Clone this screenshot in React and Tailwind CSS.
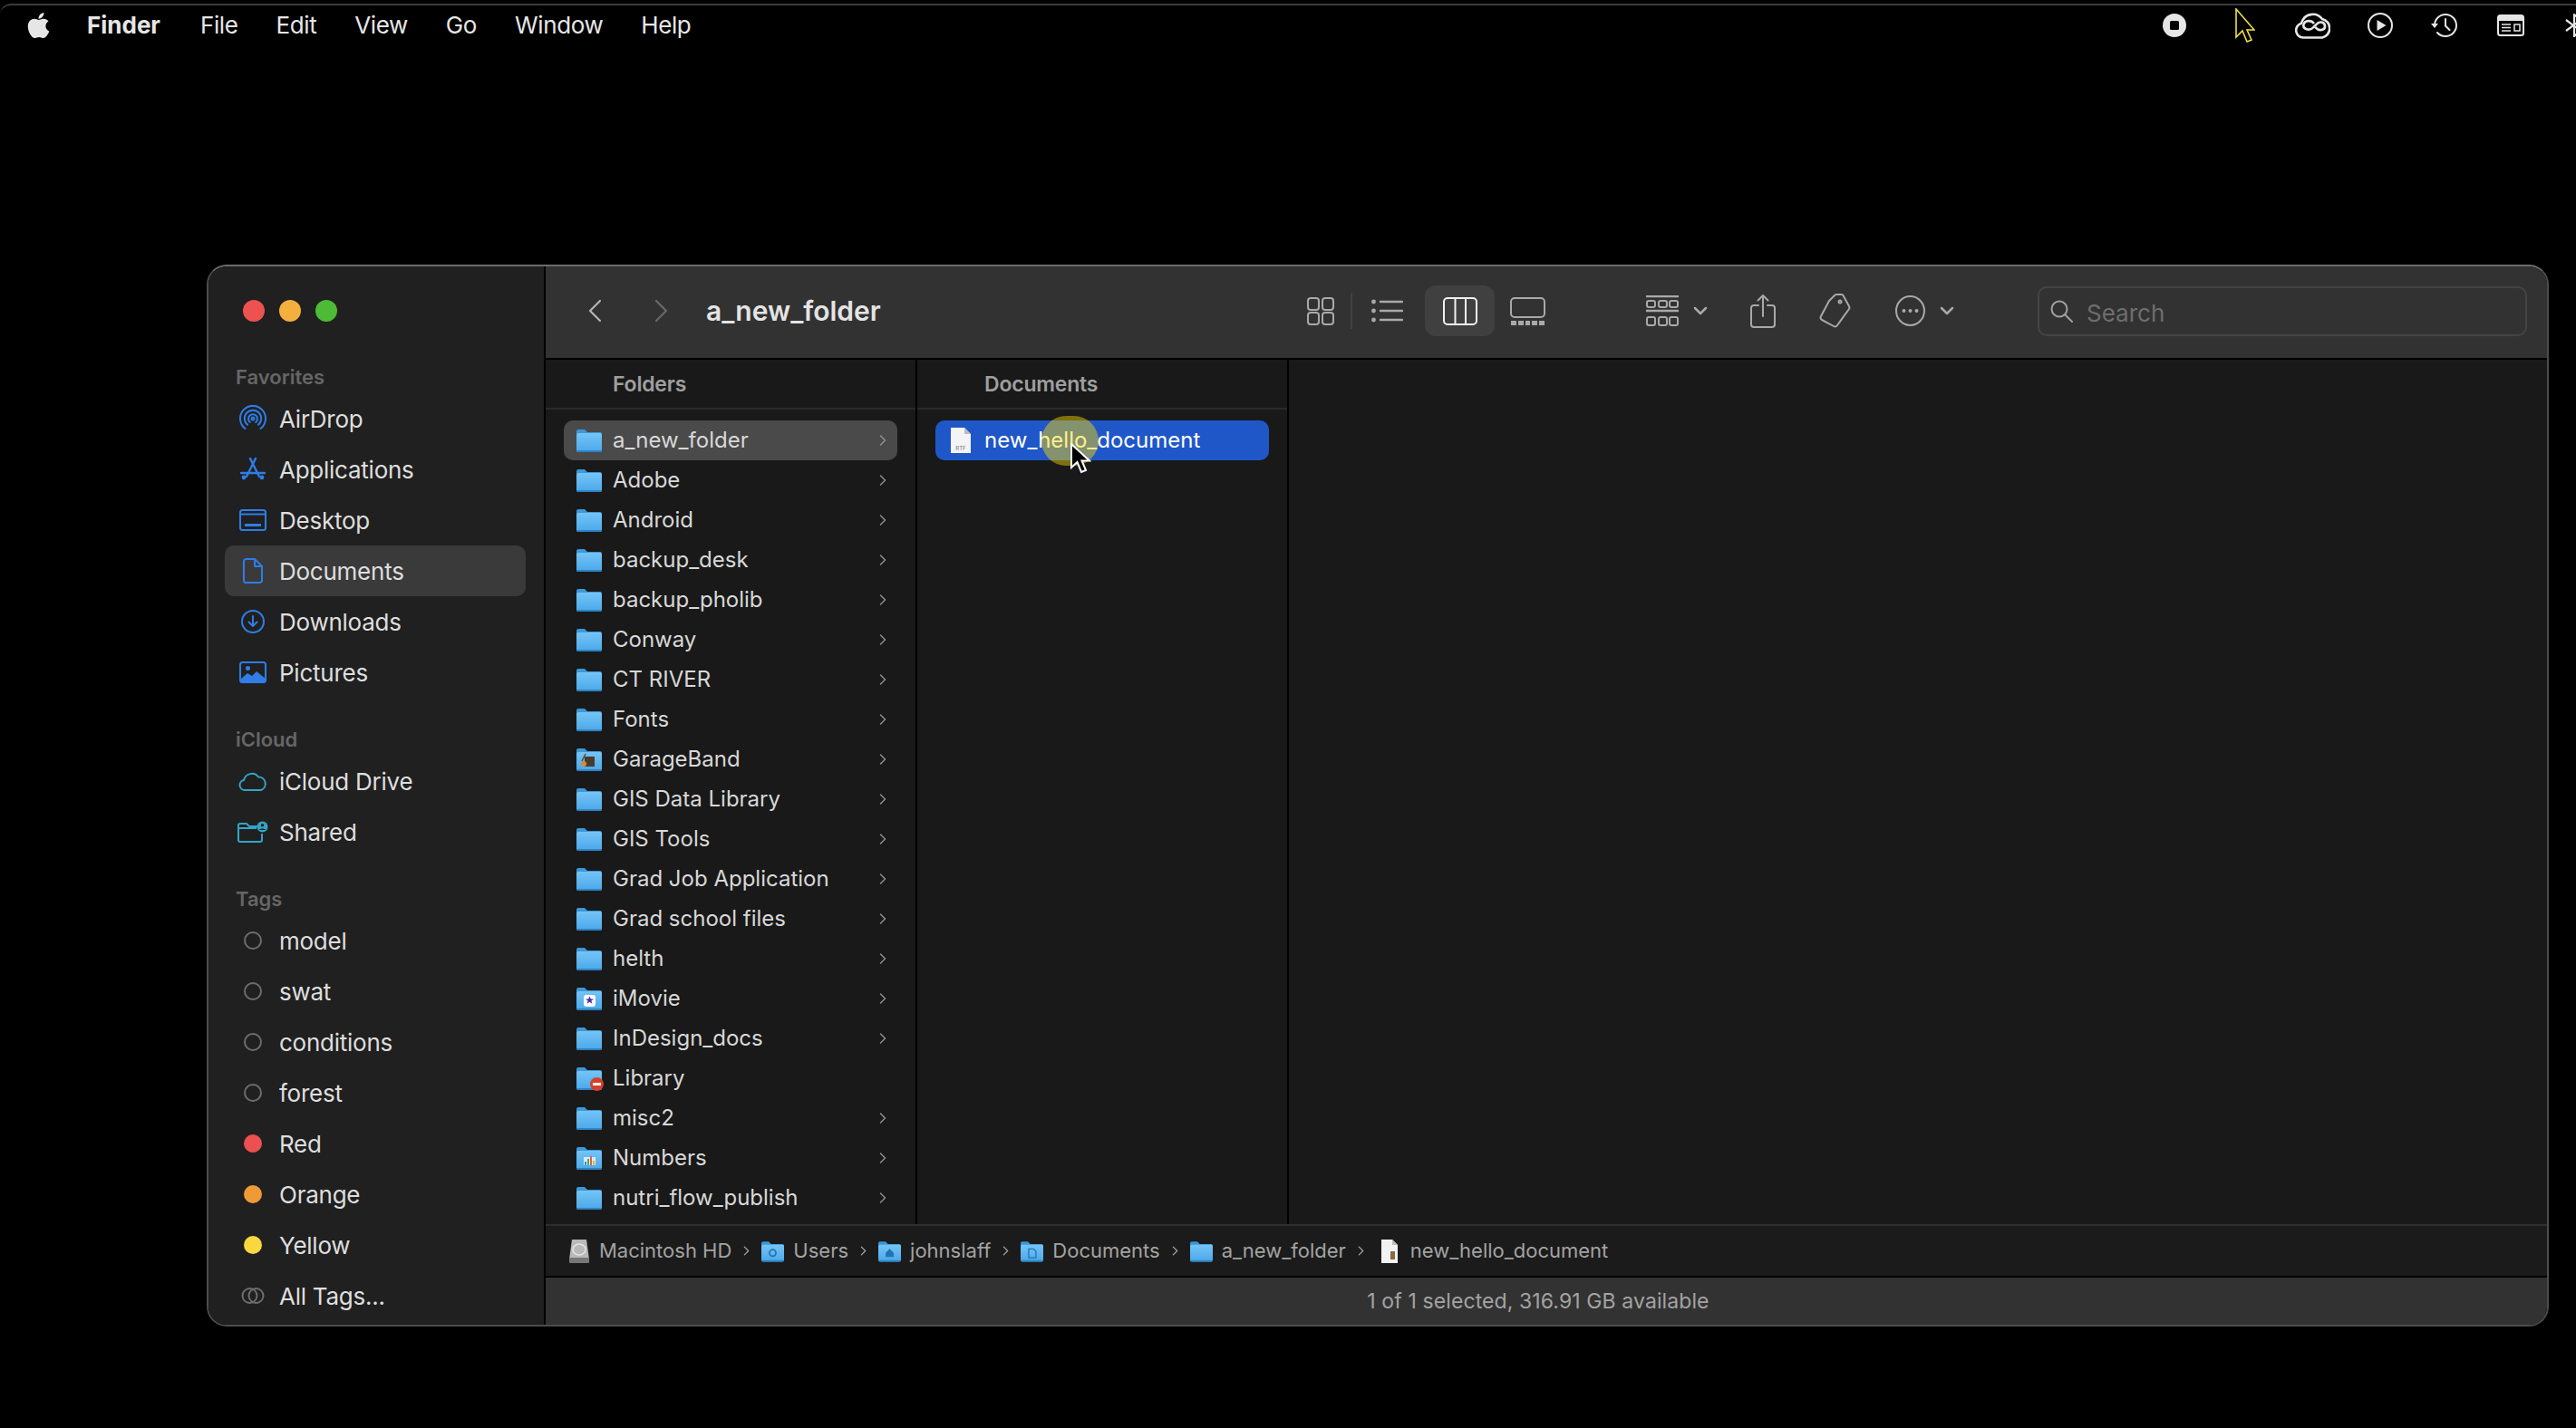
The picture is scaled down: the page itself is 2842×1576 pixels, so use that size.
import React from 'react';
import { FaApple } from 'react-icons/fa';

const menuItems = ['File', 'Edit', 'View', 'Go', 'Window', 'Help'];

const FolderIcon = ({ className = 'w-[28px] h-[26px]', children }) => (
  <svg viewBox="0 0 28 26" className={`${className} shrink-0`}>
    <path d="M0 3a2 2 0 0 1 2-2h7l3 3h14a2 2 0 0 1 2 2v6H0z" fill="#3d97d8" />
    <path d="M0 7a2 2 0 0 1 2-2h24a2 2 0 0 1 2 2v17a2 2 0 0 1-2 2H2a2 2 0 0 1-2-2z" fill="url(#folderFill)" />
    <path d="M0 24h28a2 2 0 0 1-2 2H2a2 2 0 0 1-2-2z" fill="#2f83c4" />
    {children}
  </svg>
);

const GarageBadge = () => (
  <g>
    <rect x="9" y="10" width="11" height="11" fill="#4a3a2c" />
    <path d="M10 7l-4 8" stroke="#6b4a24" strokeWidth="1.5" />
    <circle cx="8" cy="18" r="3" fill="#d08d3a" />
  </g>
);

const MovieBadge = () => (
  <g>
    <rect x="8" y="9" width="13" height="13" rx="3" fill="#ffffff" />
    <path d="M14.500 10.500l1.300 3h3.200l-2.600 2 1 3.200-2.900-1.900-2.900 1.900 1-3.200-2.600-2h3.200z" fill="#4b2fa8" />
  </g>
);

const NumbersBadge = () => (
  <g>
    <rect x="8" y="12" width="13" height="9" fill="#d7ecfa" />
    <rect x="9" y="17" width="2" height="4" fill="#3c8de0" />
    <rect x="12" y="14" width="2" height="7" fill="#4cb050" />
    <rect x="15" y="11" width="2" height="10" fill="#e2604f" />
    <rect x="18" y="16" width="2" height="5" fill="#f0b23c" />
  </g>
);

const folders = [
  { name: 'a_new_folder', selected: true },
  { name: 'Adobe' },
  { name: 'Android' },
  { name: 'backup_desk' },
  { name: 'backup_pholib' },
  { name: 'Conway' },
  { name: 'CT RIVER' },
  { name: 'Fonts' },
  { name: 'GarageBand', badge: <GarageBadge /> },
  { name: 'GIS Data Library' },
  { name: 'GIS Tools' },
  { name: 'Grad Job Application' },
  { name: 'Grad school files' },
  { name: 'helth' },
  { name: 'iMovie', badge: <MovieBadge /> },
  { name: 'InDesign_docs' },
  { name: 'Library', locked: true },
  { name: 'misc2' },
  { name: 'Numbers', badge: <NumbersBadge /> },
  { name: 'nutri_flow_publish' },
];

const Chevron = ({ className = 'w-[8px] h-[12px] text-[#8f8f8f]' }) => (
  <svg viewBox="0 0 8 12" className={`${className} shrink-0`} fill="none" stroke="currentColor" strokeWidth="1.500" strokeLinecap="round" strokeLinejoin="round">
    <path d="M1.500 1l5 5-5 5" />
  </svg>
);

const ToolChevron = () => (
  <svg viewBox="0 0 16 10" className="w-[16px] h-[10px] shrink-0" fill="none" stroke="#a9a9a9" strokeWidth="2.500" strokeLinecap="round" strokeLinejoin="round">
    <path d="M2 2l6 6 6-6" />
  </svg>
);

const blueStroke = {
  fill: 'none',
  stroke: '#2f7de6',
  strokeWidth: 2,
  strokeLinecap: 'round',
  strokeLinejoin: 'round',
};

const AirDropIcon = () => (
  <svg viewBox="0 0 30 30" className="w-[30px] h-[30px]" {...blueStroke}>
    <path d="M6.500 26A14 14 0 1 1 23.500 26" />
    <path d="M9 21.800A9.200 9.200 0 1 1 21 21.800" />
    <path d="M11.800 19A5 5 0 1 1 18.200 19" />
    <circle cx="15" cy="15" r="1.500" />
  </svg>
);

const ApplicationsIcon = () => (
  <svg viewBox="0 0 28 26" className="w-[28px] h-[26px]" {...blueStroke} strokeWidth="2.400">
    <path d="M11 1l10 20M17 1L7 21M1 17h26" />
    <circle cx="4" cy="22" r="1.200" />
    <circle cx="24" cy="22" r="1.200" />
  </svg>
);

const DesktopIcon = () => (
  <svg viewBox="0 0 30 24" className="w-[30px] h-[24px]" {...blueStroke}>
    <rect x="1" y="1" width="28" height="22" rx="2.500" />
    <path d="M1 5.500h28" />
    <path d="M6 17.500h18" strokeWidth="3" strokeLinecap="butt" />
  </svg>
);

const DocumentsIcon = () => (
  <svg viewBox="0 0 22 28" className="w-[22px] h-[28px]" {...blueStroke}>
    <path d="M3.500 1H13l8 8v15.500a2.500 2.500 0 0 1-2.500 2.500h-15A2.500 2.500 0 0 1 1 24.500v-21A2.500 2.500 0 0 1 3.500 1z" />
    <path d="M13 1v8h8" />
  </svg>
);

const DownloadsIcon = () => (
  <svg viewBox="0 0 26 26" className="w-[26px] h-[26px]" {...blueStroke}>
    <circle cx="13" cy="13" r="12" />
    <path d="M13 7v11M8.500 13.500L13 18l4.500-4.500" />
  </svg>
);

const PicturesIcon = () => (
  <svg viewBox="0 0 30 24" className="w-[30px] h-[24px]">
    <rect x="1" y="1" width="28" height="22" rx="2.500" fill="none" stroke="#2f7de6" strokeWidth="2" />
    <circle cx="9.500" cy="7.500" r="2.500" fill="#2f7de6" />
    <path d="M1 20l8-7 5 3 5-5 10 8v3a2 2 0 0 1-2 2H3a2 2 0 0 1-2-2z" fill="#2f7de6" />
  </svg>
);

const CloudIcon = () => (
  <svg viewBox="0 0 32 22" className="w-[32px] h-[22px]" fill="none" stroke="#32a5c7" strokeWidth="2" strokeLinejoin="round">
    <path d="M7 21a5.500 5.500 0 0 1-1-10.900A9 9 0 0 1 22 6.500a7.500 7.500 0 0 1 3 14.500z" />
  </svg>
);

const SharedIcon = () => (
  <svg viewBox="0 0 34 24" className="w-[34px] h-[24px]">
    <path d="M1 5a2 2 0 0 1 2-2h7l3 3h9M1 8h20M27 14v7a2 2 0 0 1-2 2H3a2 2 0 0 1-2-2V5" fill="none" stroke="#32a5c7" strokeWidth="2" />
    <circle cx="27.500" cy="6.500" r="6" fill="#32a5c7" />
    <circle cx="27.500" cy="4.800" r="1.800" fill="#202020" />
    <path d="M24 10c.6-2 6.400-2 7 0z" fill="#202020" />
  </svg>
);

const Dot = ({ className }) => <span className={`w-[20px] h-[20px] rounded-full ${className}`} />;

const AllTagsIcon = () => (
  <svg viewBox="0 0 26 20" className="w-[26px] h-[20px]" fill="none" stroke="#6d6d6d" strokeWidth="2">
    <circle cx="9.500" cy="10" r="8" />
    <circle cx="16.500" cy="10" r="8" />
  </svg>
);

const favorites = [
  { name: 'AirDrop', icon: <AirDropIcon /> },
  { name: 'Applications', icon: <ApplicationsIcon /> },
  { name: 'Desktop', icon: <DesktopIcon /> },
  { name: 'Documents', icon: <DocumentsIcon />, active: true },
  { name: 'Downloads', icon: <DownloadsIcon /> },
  { name: 'Pictures', icon: <PicturesIcon /> },
];

const cloudItems = [
  { name: 'iCloud Drive', icon: <CloudIcon /> },
  { name: 'Shared', icon: <SharedIcon /> },
];

const tagItems = [
  { name: 'model', icon: <Dot className="border-2 border-[#6d6d6d]" /> },
  { name: 'swat', icon: <Dot className="border-2 border-[#6d6d6d]" /> },
  { name: 'conditions', icon: <Dot className="border-2 border-[#6d6d6d]" /> },
  { name: 'forest', icon: <Dot className="border-2 border-[#6d6d6d]" /> },
  { name: 'Red', icon: <Dot className="bg-[#ec5050]" /> },
  { name: 'Orange', icon: <Dot className="bg-[#f09a37]" /> },
  { name: 'Yellow', icon: <Dot className="bg-[#f7d83f]" /> },
  { name: 'All Tags...', icon: <AllTagsIcon /> },
];

const SidebarLabel = ({ children }) => (
  <div className="h-[36px] pl-[30px] flex items-center text-[22px] font-semibold text-[#666666]">{children}</div>
);

const SidebarItem = ({ item }) => (
  <div className={`h-[56px] ml-[18px] mr-[20px] flex items-center rounded-[10px] text-[26px] text-[#dedede] tracking-[-0.25px] ${item.active ? 'bg-[#3a3a3a]' : ''}`}>
    <span className="w-[60px] pl-[2px] flex justify-center shrink-0">{item.icon}</span>
    <span>{item.name}</span>
  </div>
);

const Sidebar = () => (
  <aside className="w-[372px] shrink-0 bg-[#202020] border-r-2 border-black flex flex-col">
    <div className="h-[104px] pb-[6px] pl-[38px] flex items-center gap-[16px]">
      <span className="w-[24px] h-[24px] rounded-full bg-[#ec5250]" />
      <span className="w-[24px] h-[24px] rounded-full bg-[#f4b03c]" />
      <span className="w-[24px] h-[24px] rounded-full bg-[#4dbb35]" />
    </div>
    <SidebarLabel>Favorites</SidebarLabel>
    {favorites.map((item) => (
      <SidebarItem key={item.name} item={item} />
    ))}
    <div className="mt-[28px]">
      <SidebarLabel>iCloud</SidebarLabel>
      {cloudItems.map((item) => (
        <SidebarItem key={item.name} item={item} />
      ))}
    </div>
    <div className="mt-[28px]">
      <SidebarLabel>Tags</SidebarLabel>
      {tagItems.map((item) => (
        <SidebarItem key={item.name} item={item} />
      ))}
    </div>
  </aside>
);

const toolStroke = {
  fill: 'none',
  stroke: '#a9a9a9',
  strokeWidth: 2,
  strokeLinecap: 'round',
  strokeLinejoin: 'round',
};

const Toolbar = () => (
  <header className="h-[103px] shrink-0 pb-[3px] pr-[22px] pl-[47px] flex items-center bg-[#323232] border-b-2 border-black">
    <svg viewBox="0 0 15 26" className="w-[15px] h-[26px] shrink-0" fill="none" stroke="#b5b5b5" strokeWidth="2.200" strokeLinecap="round" strokeLinejoin="round">
      <path d="M13 2L2 13l11 11" />
    </svg>
    <svg viewBox="0 0 15 26" className="ml-[58px] w-[15px] h-[26px] shrink-0" fill="none" stroke="#6a6a6a" strokeWidth="2.200" strokeLinecap="round" strokeLinejoin="round">
      <path d="M2 2l11 11L2 24" />
    </svg>
    <h1 className="ml-[42px] text-[30px] font-semibold text-[#e4e4e4]">a_new_folder</h1>
    <div className="flex-1" />
    <svg viewBox="0 0 30 31" className="w-[30px] h-[31px] shrink-0" {...toolStroke}>
      <rect x="1" y="1" width="12" height="13" rx="3" />
      <rect x="17" y="1" width="12" height="13" rx="3" />
      <rect x="1" y="17" width="12" height="13" rx="3" />
      <rect x="17" y="17" width="12" height="13" rx="3" />
    </svg>
    <span className="ml-[18px] w-[2px] h-[40px] bg-[#414141] shrink-0" />
    <svg viewBox="0 0 35 26" className="ml-[21px] w-[35px] h-[26px] shrink-0" {...toolStroke} strokeWidth="2.400">
      <path d="M10 3h24M10 13h24M10 23h24" />
      <circle cx="2.500" cy="3" r="1.200" />
      <circle cx="2.500" cy="13" r="1.200" />
      <circle cx="2.500" cy="23" r="1.200" />
    </svg>
    <span className="ml-[24px] w-[77px] h-[56px] rounded-[12px] bg-[#404040] flex items-center justify-center shrink-0">
      <svg viewBox="0 0 38 31" className="w-[38px] h-[31px]" fill="none" stroke="#f0f0f0" strokeWidth="2">
        <rect x="1" y="1" width="36" height="29" rx="4" />
        <path d="M13.500 1v29M25 1v29" />
      </svg>
    </span>
    <svg viewBox="0 0 39 31" className="ml-[17px] w-[39px] h-[31px] shrink-0">
      <rect x="1" y="1" width="37" height="21" rx="4" fill="none" stroke="#a9a9a9" strokeWidth="2" />
      <path d="M1 26h6v5H1zM9 26h6v5H9zM17 26h5v5h-5zM24 26h6v5h-6zM32 26h6v5h-6z" fill="#a9a9a9" />
    </svg>
    <svg viewBox="0 0 36 34" className="ml-[111px] w-[36px] h-[34px] shrink-0" {...toolStroke}>
      <path d="M0 1h36M0 17h36" strokeLinecap="butt" strokeWidth="2.600" />
      <rect x="1" y="6" width="9" height="7" rx="2" />
      <rect x="14" y="6" width="9" height="7" rx="2" />
      <rect x="26" y="6" width="9" height="7" rx="2" />
      <rect x="1" y="24" width="9" height="9" rx="2" />
      <rect x="14" y="24" width="9" height="9" rx="2" />
      <rect x="26" y="24" width="9" height="9" rx="2" />
    </svg>
    <span className="ml-[16px] flex"><ToolChevron /></span>
    <svg viewBox="0 0 28 38" className="ml-[47px] w-[28px] h-[38px] shrink-0" {...toolStroke}>
      <path d="M9 13H4a3 3 0 0 0-3 3v18a3 3 0 0 0 3 3h20a3 3 0 0 0 3-3V16a3 3 0 0 0-3-3h-5" />
      <path d="M14 25V2M8.500 7.500L14 2l5.500 5.500" />
    </svg>
    <svg viewBox="0 0 36 38" className="ml-[47px] w-[36px] h-[38px] shrink-0" {...toolStroke}>
      <path d="M12 8l6-6a3 3 0 0 1 2-1h5a3 3 0 0 1 3 2l6 11a3 3 0 0 1 0 3L21 35a3 3 0 0 1-4 1L4 29a3 3 0 0 1-1-4z" />
      <circle cx="24" cy="9" r="1.500" />
    </svg>
    <svg viewBox="0 0 33 34" className="ml-[49px] w-[33px] h-[34px] shrink-0" {...toolStroke}>
      <ellipse cx="16.500" cy="17" rx="15.500" ry="16" />
      <circle cx="9.500" cy="17" r="2" fill="#a9a9a9" stroke="none" />
      <circle cx="16.500" cy="17" r="2" fill="#a9a9a9" stroke="none" />
      <circle cx="23.500" cy="17" r="2" fill="#a9a9a9" stroke="none" />
    </svg>
    <span className="ml-[16px] flex"><ToolChevron /></span>
    <div className="ml-[92px] w-[540px] h-[55px] rounded-[10px] border-2 border-[#444444] flex items-center shrink-0">
      <svg viewBox="0 0 25 25" className="ml-[12px] w-[25px] h-[25px]" fill="none" stroke="#a0a0a0" strokeWidth="2" strokeLinecap="round">
        <circle cx="10" cy="10" r="8.500" />
        <path d="M16 16l8 8" />
      </svg>
      <span className="ml-[15px] pt-[5px] text-[26px] text-[#6e6e6e]">Search</span>
    </div>
  </header>
);

const FolderRow = ({ folder }) => (
  <div className={`h-[44px] shrink-0 pl-[14px] pr-[12px] flex items-center rounded-[10px] ${folder.selected ? 'bg-[#4a4a4a]' : ''}`}>
    <span className="relative flex shrink-0">
      <FolderIcon>{folder.badge}</FolderIcon>
      {folder.locked && (
        <span className="absolute right-[-2px] bottom-[-1px] w-[15px] h-[15px] rounded-full bg-[#d5402b] flex items-center justify-center">
          <span className="w-[9px] h-[3px] bg-white" />
        </span>
      )}
    </span>
    <span className="ml-[12px] flex-1 text-[24px] text-[#d8d8d8] whitespace-nowrap">{folder.name}</span>
    {!folder.locked && <Chevron />}
  </div>
);

const ColumnHeader = ({ children }) => (
  <div className="h-[55px] pl-[74px] pt-[1px] shrink-0 flex items-center border-b-2 border-[#2a2a2a] text-[23px] font-semibold text-[#9f9f9f] tracking-[-0.2px]">{children}</div>
);

const FileIcon = () => (
  <svg viewBox="0 0 24 30" className="w-[24px] h-[30px] shrink-0">
    <path d="M1 1h15l7 7v21H1z" fill="#f4f4f4" />
    <path d="M16 1v7h7z" fill="#bcbcbc" />
    <text x="12" y="26" textAnchor="middle" fontSize="6" fill="#777777">RTF</text>
  </svg>
);

const Columns = () => (
  <div className="flex-1 min-h-0 flex overflow-hidden bg-[#191919]">
    <div className="w-[410px] shrink-0 flex flex-col border-r-2 border-black">
      <ColumnHeader>Folders</ColumnHeader>
      <div className="pt-[12px] px-[20px] flex flex-col">
        {folders.map((folder) => (
          <FolderRow key={folder.name} folder={folder} />
        ))}
      </div>
    </div>
    <div className="w-[410px] shrink-0 flex flex-col border-r-2 border-black">
      <ColumnHeader>Documents</ColumnHeader>
      <div className="pt-[12px] pl-[20px] pr-[20px]">
        <div className="h-[44px] pl-[16px] flex items-center rounded-[10px] bg-[#1f57c8]">
          <FileIcon />
          <span className="ml-[14px] text-[24px] text-white">new_hello_document</span>
        </div>
      </div>
    </div>
  </div>
);

const pathItems = [
  { name: 'Macintosh HD', type: 'disk' },
  { name: 'Users', type: 'folder', glyph: <circle cx="14" cy="15" r="4" fill="none" stroke="#2673b3" strokeWidth="2" /> },
  { name: 'johnslaff', type: 'folder', glyph: <path d="M14 10l5 5v5h-10v-5z" fill="#2673b3" /> },
  { name: 'Documents', type: 'folder', glyph: <path d="M10 10h6l3 3v8h-9z" fill="none" stroke="#2673b3" strokeWidth="1.500" /> },
  { name: 'a_new_folder', type: 'folder' },
  { name: 'new_hello_document', type: 'file' },
];

const PathIcon = ({ item }) => {
  if (item.type === 'disk') {
    return (
      <svg viewBox="0 0 24 28" className="w-[24px] h-[28px] shrink-0">
        <path d="M4 1h16l3 22H1z" fill="#b9b9b9" />
        <rect x="1" y="21" width="22" height="6" rx="1" fill="#777777" />
        <ellipse cx="12" cy="12" rx="7" ry="6" fill="none" stroke="#e6e6e6" strokeWidth="1.500" />
      </svg>
    );
  }
  if (item.type === 'file') {
    return (
      <svg viewBox="0 0 20 26" className="ml-[5px] mr-[3px] w-[20px] h-[26px] shrink-0">
        <path d="M1 0h12l6 6v20H1z" fill="#f2f2f2" />
        <path d="M13 0v6h6z" fill="#bcbcbc" />
        <rect x="11" y="13" width="5" height="9" fill="#8a6a3c" />
      </svg>
    );
  }
  return <FolderIcon className="w-[25px] h-[24px]">{item.glyph}</FolderIcon>;
};

const PathBar = () => (
  <div className="h-[59px] shrink-0 pl-[25px] flex items-center bg-[#1b1b1b] border-t-2 border-[#2e2e2e] border-b-2 border-b-black text-[22px] text-[#a3a3a3]">
    {pathItems.map((item, index) => (
      <React.Fragment key={item.name}>
        <PathIcon item={item} />
        <span className="ml-[10px] whitespace-nowrap">{item.name}</span>
        {index < pathItems.length - 1 && (
          <span className="mx-[13px] flex">
            <Chevron className="w-[7px] h-[11px] text-[#a3a3a3]" />
          </span>
        )}
      </React.Fragment>
    ))}
  </div>
);

const StatusBar = () => (
  <div className="h-[52px] shrink-0 pr-[18px] flex items-center justify-center bg-[#323232] text-[23px] text-[#a3a3a3] tracking-[0.1px]">
    1 of 1 selected, 316.91 GB available
  </div>
);

const FinderWindow = () => (
  <div className="relative ml-[228px] mt-[242px] w-[2584px] h-[1172px] flex overflow-hidden rounded-[22px] border-2 border-[#4c4c4c] border-t-[#6c6c6c]">
    <Sidebar />
    <main className="flex-1 min-w-0 flex flex-col">
      <Toolbar />
      <Columns />
      <PathBar />
      <StatusBar />
    </main>
    {/* click highlight and pointer from the screen recorder */}
    <span className="absolute left-[919px] top-[165px] w-[63px] h-[55px] rounded-full bg-[#ffdc00]/45" />
    <svg viewBox="0 0 24 34" className="absolute left-[950px] top-[195px] w-[24px] h-[34px]">
      <path d="M2 1v26l6.500-6 4.500 11 5-2-4.500-10.500H22z" fill="#000000" stroke="#ffffff" strokeWidth="2" />
    </svg>
  </div>
);

const MenuBar = () => (
  <div className="mt-[4px] h-[46px] flex items-center border-t-2 border-[#3a3a3a] rounded-tl-[12px] pl-[30px] text-[26px] text-[#e6e6e6]">
    <FaApple className="w-[25px] h-[32px] text-[#e6e6e6] shrink-0" />
    <div className="ml-[41px] pb-[2px] flex items-center gap-[42px] tracking-[-0.4px]">
      <span className="font-bold tracking-normal mr-[2px]">Finder</span>
      {menuItems.map((item) => (
        <span key={item}>{item}</span>
      ))}
    </div>
    <div className="ml-auto mr-[-9px] flex items-center">
      <svg viewBox="0 0 26 26" className="w-[26px] h-[26px] shrink-0">
        <circle cx="13" cy="13" r="13" fill="#e6e6e6" />
        <rect x="8" y="8" width="10" height="10" rx="1.500" fill="#000000" />
      </svg>
      <svg viewBox="0 0 22 38" className="ml-[54px] w-[22px] h-[38px] shrink-0">
        <path d="M1 1v31l7-7 5 12 5-2-5-11h8z" fill="#000000" stroke="#f0e040" strokeWidth="1.600" />
      </svg>
      <svg viewBox="0 0 39 29" className="ml-[44px] w-[39px] h-[29px] shrink-0" fill="none" stroke="#e6e6e6" strokeWidth="2.600">
        <path d="M9 27.500a8 8 0 0 1-2-15.700A13 13 0 0 1 30 7a10.500 10.500 0 0 1 0 20.500z" />
        <path d="M21 12c-3-4-10-4-11.500 1-1.400 5 6.500 8 11 3l3-3c3-4 9-3 9.500 1.500.5 5-7 6.500-10.500 1.500" />
      </svg>
      <svg viewBox="0 0 28 28" className="ml-[41px] w-[28px] h-[28px] shrink-0">
        <circle cx="14" cy="14" r="13" fill="none" stroke="#e6e6e6" strokeWidth="2" />
        <path d="M10.500 8l10 6-10 6z" fill="#e6e6e6" />
      </svg>
      <svg viewBox="0 0 29 26" className="ml-[42px] w-[29px] h-[26px] shrink-0" fill="none" stroke="#e6e6e6" strokeWidth="2" strokeLinecap="round">
        <path d="M4 13A12 12 0 1 1 16 25a12 12 0 0 1-9-4" />
        <path d="M16 6v7.500l4.500 4.500" />
        <path d="M0 11h8l-4 5z" fill="#e6e6e6" stroke="none" />
      </svg>
      <svg viewBox="0 0 30 24" className="ml-[44px] w-[30px] h-[24px] shrink-0">
        <rect x="1" y="1" width="28" height="22" rx="2.500" fill="none" stroke="#e6e6e6" strokeWidth="2" />
        <path d="M1 3a2 2 0 0 1 2-2h24a2 2 0 0 1 2 2v4H1z" fill="#e6e6e6" />
        <path d="M5 11h10M5 14.500h10M5 18h10M19 11h6v7h-6z" fill="none" stroke="#e6e6e6" strokeWidth="1.500" />
      </svg>
      <svg viewBox="0 0 22 28" className="ml-[44px] w-[22px] h-[28px] shrink-0" fill="none" stroke="#e6e6e6" strokeWidth="2.200" strokeLinejoin="round">
        <path d="M2 8l16 12-7 6V2l7 6L2 20" />
      </svg>
    </div>
  </div>
);

const App = () => {
  return (
    <div className="w-[2842px] h-[1576px] overflow-hidden bg-black font-[Inter,sans-serif]">
      <svg className="absolute w-0 h-0">
        <defs>
          <linearGradient id="folderFill" x1="0" y1="0" x2="0" y2="1">
            <stop offset="0" stopColor="#74c4f6" />
            <stop offset="1" stopColor="#4aa8ea" />
          </linearGradient>
        </defs>
      </svg>
      <MenuBar />
      <FinderWindow />
    </div>
  );
};

export default App;
